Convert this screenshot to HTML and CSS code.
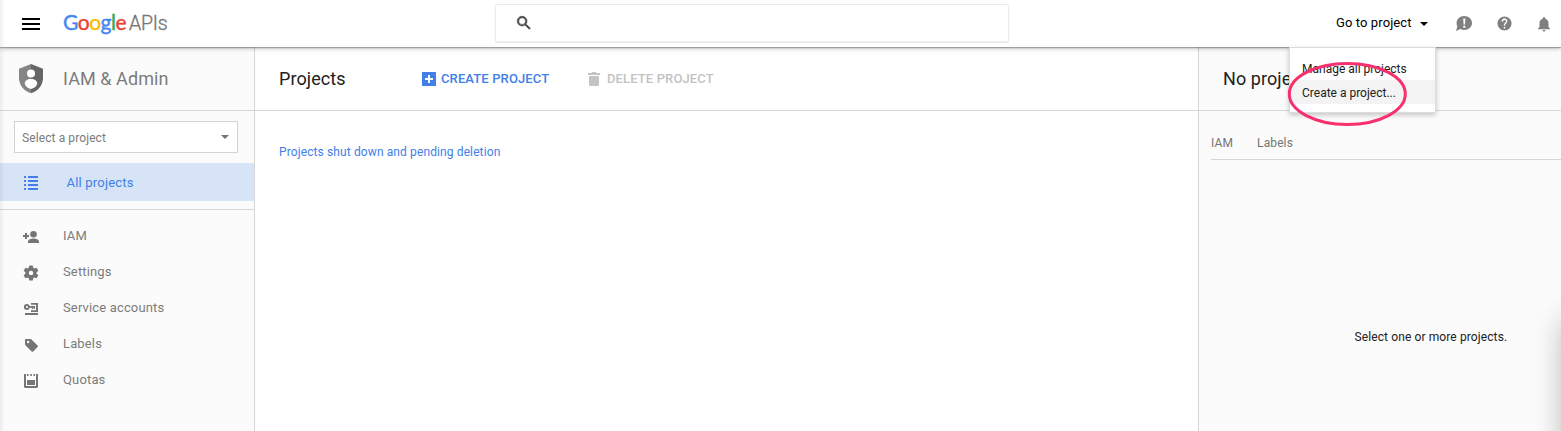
FILE: index.html
```html
<!DOCTYPE html>
<html lang="en">
<head>
<meta charset="utf-8">
<title>Projects - IAM &amp; Admin</title>
<link rel="stylesheet" href="styles.css">
</head>
<body>
<header class="topbar">
  <svg class="menu-icon" width="18" height="12" viewBox="0 0 18 12"><path d="M0 0h18v2H0zM0 5h18v2H0zM0 10h18v2H0z"/></svg>
  <div class="logo"><span class="google"><span class="b">G</span><span class="r">o</span><span class="y">o</span><span class="b">g</span><span class="g">l</span><span class="r">e</span></span><span class="apis">APIs</span></div>
  <div class="search"><svg width="18" height="18" viewBox="0 0 24 24"><path stroke="#444" stroke-width=".8" d="M15.5 14h-.79l-.28-.27A6.47 6.47 0 0 0 16 9.500 6.500 6.500 0 1 0 9.500 16c1.610 0 3.090-.59 4.230-1.570l.27.28v.79l5 4.990L20.490 19l-4.990-5zm-6 0A4.500 4.500 0 1 1 14 9.500 4.490 4.490 0 0 1 9.500 14z"/></svg></div>
  <div class="tools">
    <span class="goto">Go to project</span><i class="caret dark"></i>
    <svg class="feedback" width="16" height="15" viewBox="0 0 16 15"><path d="M8.300 0C12.600 0 16 3 16 7s-3.400 7-7.700 7c-1.500 0-2.800-.3-3.900-.9L0 15l1.300-4.600A6.600 6.600 0 0 1 .6 7C.6 3 4 0 8.300 0z"/><path fill="#fff" d="M7.200 2.500h2.200L9 8.500H7.600zM7.300 9.700h2v2h-2z"/></svg>
    <svg class="help" width="17" height="17" viewBox="0 0 24 24"><path d="M12 2a10 10 0 1 0 0 20 10 10 0 0 0 0-20zm1 17h-2v-2h2v2zm2.070-7.750-.9.920C13.450 12.900 13 13.500 13 15h-2v-.5c0-1.100.45-2.100 1.170-2.830l1.240-1.260A2 2 0 1 0 10 9H8a4 4 0 1 1 7.070 2.250z"/></svg>
    <svg class="bell" width="18" height="18" viewBox="0 0 24 24"><path d="M12 22a2 2 0 0 0 2-2h-4a2 2 0 0 0 2 2zm6-6v-5c0-3.070-1.640-5.640-4.500-6.320V4a1.500 1.500 0 0 0-3 0v.68C7.630 5.360 6 7.920 6 11v5l-2 2v1h16v-1z"/></svg>
  </div>
  <div class="dropdown">
    <div class="option">Manage all projects</div>
    <div class="option active">Create a project...</div>
  </div>
  <svg class="highlight" width="120" height="66" viewBox="0 0 120 66"><ellipse cx="60.300" cy="33" rx="58" ry="30.500"/></svg>
</header>
<div class="columns">
  <aside class="sidebar">
    <div class="product">
      <svg width="24" height="30" viewBox="0 0 24 30"><path fill="#858585" d="M12 0 0 4.700V14c0 7 5 13.300 12 15.300z"/><path fill="#666" d="m12 0 12 4.700V14c0 7-5 13.300-12 15.300z"/><circle cx="12" cy="9.500" r="4" fill="#fff"/><path fill="#fff" d="M12 15c3.700 0 6.300 2 6.300 4.800A8 8 0 0 1 12 25a8 8 0 0 1-6.300-5.200C5.700 17 8.300 15 12 15z"/></svg>
      <span>IAM &amp; Admin</span>
    </div>
    <div class="picker"><span>Select a project</span><i class="caret"></i></div>
    <div class="item selected"><svg width="14" height="14" viewBox="0 0 14 14"><path d="M0 0h2v2H0zM4 0h10v2H4zM0 4h2v2H0zM4 4h10v2H4zM0 8h2v2H0zM4 8h10v2H4zM0 12h2v2H0zM4 12h10v2H4z"/></svg><span>All projects</span></div>
    <nav class="nav">
      <div class="item"><svg width="16" height="12" viewBox="0 0 16 12"><circle cx="10.500" cy="3.300" r="3.300"/><path d="M5 12v-1.500c0-2 3-3 5.500-3s5.500 1 5.500 3V12zM2 2h2v2h2v2H4v2H2V6H0V4h2z"/></svg><span>IAM</span></div>
      <div class="item"><svg width="18" height="18" viewBox="0 0 24 24"><path d="M19.430 12.980c.04-.32.07-.64.07-.98s-.03-.66-.07-.98l2.110-1.650a.5.5 0 0 0 .12-.64l-2-3.460a.5.5 0 0 0-.61-.22l-2.490 1a7.300 7.300 0 0 0-1.690-.98l-.38-2.650A.5.5 0 0 0 14 2h-4a.5.5 0 0 0-.49.420l-.38 2.650c-.61.25-1.170.59-1.690.98l-2.490-1a.5.5 0 0 0-.61.220l-2 3.460a.5.5 0 0 0 .12.640l2.110 1.650a8 8 0 0 0 0 1.960l-2.110 1.650a.5.5 0 0 0-.12.640l2 3.460c.12.220.39.300.61.220l2.490-1c.52.400 1.080.73 1.690.98l.38 2.650c.03.240.24.420.49.420h4a.5.5 0 0 0 .49-.42l.38-2.650a7.300 7.300 0 0 0 1.690-.98l2.490 1c.23.090.49 0 .61-.22l2-3.460a.5.5 0 0 0-.12-.64zM12 15a3 3 0 1 1 0-6 3 3 0 0 1 0 6z"/></svg><span>Settings</span></div>
      <div class="item"><svg width="14" height="12" viewBox="0 0 14 12"><path d="M7 0h7v9H7V7.300h5V1.700H7zM1 10h13v2H1z"/><path fill-rule="evenodd" d="M3 1a3 3 0 0 1 2.700 2H11v3h-1.200V4.800H9V6H7.800V4.800H5.700A3 3 0 1 1 3 1zm0 1.900a1.100 1.100 0 1 0 0 2.200 1.100 1.100 0 0 0 0-2.200z"/></svg><span>Service accounts</span></div>
      <div class="item"><svg width="14" height="14" viewBox="0 0 14 14"><path fill-rule="evenodd" d="M2.300 1h4.300l.9.400 6.100 6c.5.500.5 1.100 0 1.600l-4.400 4.400c-.5.500-1.100.5-1.600 0L1.400 7.300 1 6.500V2.300C1 1.500 1.500 1 2.300 1zm1.800 1.800a1.200 1.200 0 1 0 0 2.400 1.200 1.200 0 0 0 0-2.400z"/></svg><span>Labels</span></div>
      <div class="item"><svg width="14" height="14" viewBox="0 0 14 14"><path d="M0 0h2v12h10V0h2v13l-1 1H1l-1-1zM3 0h1.500v2H3zM6.200 0h1.600v2H6.200zM9.500 0H11v2H9.500zM3 6h8v5H3z"/></svg><span>Quotas</span></div>
    </nav>
  </aside>
  <main class="main">
    <div class="toolbar">
      <h1>Projects</h1>
      <div class="action create"><svg width="14" height="14" viewBox="0 0 14 14"><path fill-rule="evenodd" d="M0 0h14v14H0zM6 3v3H3v2h3v3h2V8h3V6H8V3z"/></svg><span>CREATE PROJECT</span></div>
      <div class="action delete"><svg width="12" height="14" viewBox="0 0 12 14"><path d="M0 1h3.500l.8-1h3.400l.8 1H12v2H0zM1 4h10v8.600c0 .8-.6 1.400-1.400 1.400H2.400C1.600 14 1 13.400 1 12.600z"/></svg><span>DELETE PROJECT</span></div>
    </div>
    <a class="pending">Projects shut down and pending deletion</a>
  </main>
  <section class="info">
    <h2>No projects</h2>
    <div class="tabs"><span class="tab-iam">IAM</span><span class="tab-labels">Labels</span></div>
    <p>Select one or more projects.</p>
  </section>
</div>
<div class="left-shade"></div>
<div class="side-clip"><div class="side-shade"></div></div>
</body>
</html>
```
FILE: styles.css
```css
* { box-sizing: border-box; }
html { overflow: hidden; }
body { margin: 0; width: 1561px; height: 431px; overflow: hidden; position: relative; background: #fff; color: #212121; font-family: Roboto, sans-serif; font-size: 12px; white-space: nowrap; }
svg { display: block; flex: none; }
h1, h2 { margin: 0; font-size: 18px; font-weight: 400; letter-spacing: .08px; }

.topbar { position: relative; z-index: 2; display: flex; align-items: center; height: 47px; padding-left: 22px; background: #fff; box-shadow: 0 1px 1px rgba(0,0,0,.25), 0 1px 5px rgba(0,0,0,.3); }
.menu-icon { fill: #000; }
.logo { display: flex; align-items: baseline; width: 432px; margin-left: 23px; padding-bottom: 1px; line-height: 24px; }
.google { width: 66px; font-family: Lato, sans-serif; font-size: 21px; -webkit-text-stroke: .4px currentColor; letter-spacing: -.5px; }
.b { color: #4285f4; } .r { color: #ea4335; } .y { color: #fbbc05; } .g { color: #34a853; }
.apis { color: #757575; font-size: 19.500px; font-weight: 300; letter-spacing: -.2px; -webkit-text-stroke: .35px currentColor; }
.search { display: flex; align-items: center; width: 514px; height: 38px; margin-bottom: 1px; padding-left: 19px; border: 1px solid #ebebeb; border-radius: 2px; box-shadow: 0 1px 1px rgba(0,0,0,.09); fill: #444; }
.tools { display: flex; align-items: center; margin-left: 327px; fill: #808080; }
.goto { width: 76px; padding-bottom: 2px; color: #000; font-size: 13px; letter-spacing: .1px; }
.caret { border: 4px solid transparent; border-top-color: #757575; border-bottom: 0; }
.caret.dark { margin-left: 8px; border-top-color: #000; }
.feedback { margin-left: 28px; }
.help { margin-left: 23.500px; }
.bell { margin-left: 22.500px; }
.dropdown { position: absolute; top: 47px; left: 1289px; width: 147px; height: 66px; padding-top: 8px; background: #fff; border: 1px solid #dcdcdc; box-shadow: 0 2px 5px rgba(0,0,0,.22); }
.option { height: 24px; padding-left: 12px; line-height: 27px; }
.active { background: #f3f3f3; }
.highlight { position: absolute; left: 1287px; top: 61px; fill: none; stroke: #f8306d; stroke-width: 3px; }

.columns { display: grid; grid-template-columns: 255px 943px 363px; height: 384px; }
.sidebar { border-right: 1px solid #d6d6d6; background: #fbfbfb; color: #7b7b7b; }
.product { display: flex; align-items: center; gap: 20px; height: 64px; padding-left: 19px; border-bottom: 1px solid #d6d6d6; font-size: 18px; letter-spacing: .08px; }
.picker { display: flex; align-items: center; justify-content: space-between; width: 224px; height: 32px; margin: 10px 0 10px 14px; padding: 0 8px 0 7px; border: 1px solid #d2d2d2; background: #fff; letter-spacing: .1px; }
.picker span { padding-top: 2px; }
.item { display: flex; align-items: center; height: 36px; font-size: 13px; letter-spacing: .15px; fill: #757575; }
.item svg { position: relative; top: 1px; margin-left: 24px; margin-right: 25px; }
.item svg[width="16"] { margin-left: 23px; margin-right: 24px; }
.item svg[width="18"] { margin-left: 22px; margin-right: 23px; }
.item span { padding-bottom: 2px; }
.item.selected { height: 38px; background: #d7e4f7; color: #4080e8; fill: #4080e8; letter-spacing: .2px; }
.item.selected svg { margin-right: 28.500px; }
.item.selected span { padding-bottom: 0; }
.nav { margin-top: 8px; padding-top: 8px; border-top: 1px solid #d6d6d6; }

.toolbar { display: flex; align-items: center; height: 64px; padding-left: 24px; border-bottom: 1px solid #d6d6d6; }
.toolbar h1 { width: 143px; }
.action { display: flex; align-items: center; gap: 5px; font-size: 13px; font-weight: 500; letter-spacing: .12px; }
.create { width: 166px; color: #4080e8; fill: #4080e8; }
.delete { gap: 7px; color: #c3c3c3; fill: #c3c3c3; }
.pending { display: block; margin: 34px 0 0 24px; color: #4080e8; line-height: 14px; letter-spacing: .115px; }

.info { border-left: 1px solid #d6d6d6; background: #fbfbfb; }
.info h2 { height: 64px; padding-left: 24px; line-height: 64px; border-bottom: 1px solid #d6d6d6; }
.tabs { display: flex; gap: 24px; height: 49px; margin-left: 12px; padding-top: 25px; border-bottom: 1px solid #d6d6d6; color: #757575; line-height: 14px; letter-spacing: .12px; }
.info p { margin: 170px 0 0 155.500px; line-height: 14px; letter-spacing: .11px; }
.left-shade { position: absolute; z-index: 3; left: 0; top: 0; width: 5px; height: 431px; background: linear-gradient(90deg, rgba(0,0,0,.06), transparent); }
.side-clip { position: absolute; z-index: 3; right: 0; bottom: 0; width: 40px; height: 170px; overflow: hidden; }
.side-shade { margin: 62px 0 0 44px; width: 50px; height: 180px; box-shadow: 0 0 30px 2px rgba(0,0,0,.28); }
```
